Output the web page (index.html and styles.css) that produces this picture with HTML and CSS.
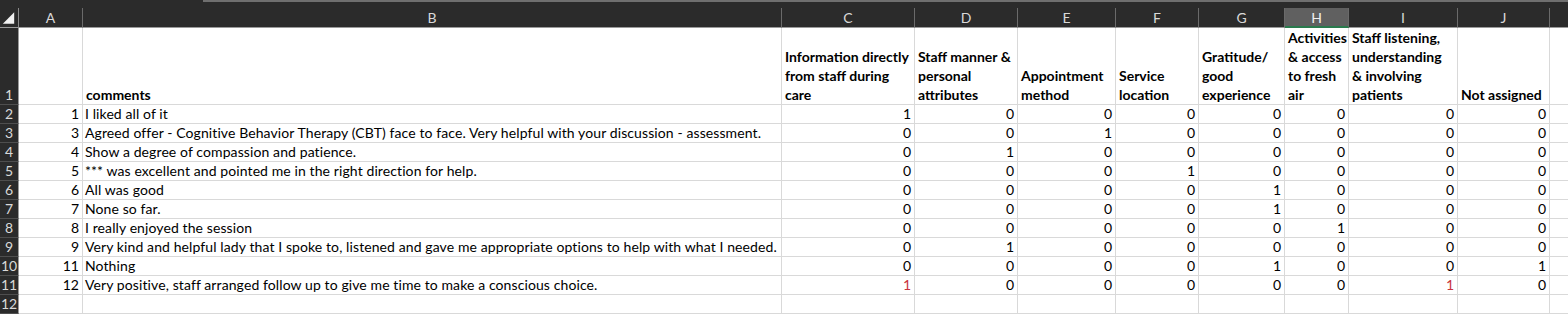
FILE: index.html
```html
<!DOCTYPE html>
<html>
<head>
<meta charset="utf-8">
<link rel="stylesheet" href="styles.css">
</head>
<body>
<div class="sheet">
  <div class="topbar"><div class="topbar-line"></div></div>
  <div class="grid">
    <div class="corner"><svg width="19" height="19" viewBox="0 0 19 19"><polygon points="15,4 15,16 3,16" fill="#f2f2f2"/></svg></div>
    <div class="ch">A</div>
    <div class="ch">B</div>
    <div class="ch">C</div>
    <div class="ch">D</div>
    <div class="ch">E</div>
    <div class="ch">F</div>
    <div class="ch">G</div>
    <div class="ch ch-sel">H</div>
    <div class="ch">I</div>
    <div class="ch">J</div>
    <div class="ch last"></div>

    <div class="rh">1</div>
    <div class="c hd"></div>
    <div class="c hd">comments</div>
    <div class="c hd">Information directly<br>from staff during<br>care</div>
    <div class="c hd">Staff manner &amp;<br>personal<br>attributes</div>
    <div class="c hd">Appointment<br>method</div>
    <div class="c hd">Service<br>location</div>
    <div class="c hd">Gratitude/<br>good<br>experience</div>
    <div class="c hd">Activities<br>&amp; access<br>to fresh<br>air</div>
    <div class="c hd">Staff listening,<br>understanding<br>&amp; involving<br>patients</div>
    <div class="c hd">Not assigned</div>
    <div class="c last"></div>

    <div class="rh">2</div><div class="c n">1</div><div class="c t">I liked all of it</div>
    <div class="c n">1</div><div class="c n">0</div><div class="c n">0</div><div class="c n">0</div><div class="c n">0</div><div class="c n">0</div><div class="c n">0</div><div class="c n">0</div><div class="c last"></div>

    <div class="rh">3</div><div class="c n">3</div><div class="c t">Agreed offer - Cognitive Behavior Therapy (CBT) face to face. Very helpful with your discussion - assessment.</div>
    <div class="c n">0</div><div class="c n">0</div><div class="c n">1</div><div class="c n">0</div><div class="c n">0</div><div class="c n">0</div><div class="c n">0</div><div class="c n">0</div><div class="c last"></div>

    <div class="rh">4</div><div class="c n">4</div><div class="c t">Show a degree of compassion and patience.</div>
    <div class="c n">0</div><div class="c n">1</div><div class="c n">0</div><div class="c n">0</div><div class="c n">0</div><div class="c n">0</div><div class="c n">0</div><div class="c n">0</div><div class="c last"></div>

    <div class="rh">5</div><div class="c n">5</div><div class="c t">*** was excellent and pointed me in the right direction for help.</div>
    <div class="c n">0</div><div class="c n">0</div><div class="c n">0</div><div class="c n">1</div><div class="c n">0</div><div class="c n">0</div><div class="c n">0</div><div class="c n">0</div><div class="c last"></div>

    <div class="rh">6</div><div class="c n">6</div><div class="c t">All was good</div>
    <div class="c n">0</div><div class="c n">0</div><div class="c n">0</div><div class="c n">0</div><div class="c n">1</div><div class="c n">0</div><div class="c n">0</div><div class="c n">0</div><div class="c last"></div>

    <div class="rh">7</div><div class="c n">7</div><div class="c t">None so far.</div>
    <div class="c n">0</div><div class="c n">0</div><div class="c n">0</div><div class="c n">0</div><div class="c n">1</div><div class="c n">0</div><div class="c n">0</div><div class="c n">0</div><div class="c last"></div>

    <div class="rh">8</div><div class="c n">8</div><div class="c t">I really enjoyed the session</div>
    <div class="c n">0</div><div class="c n">0</div><div class="c n">0</div><div class="c n">0</div><div class="c n">0</div><div class="c n">1</div><div class="c n">0</div><div class="c n">0</div><div class="c last"></div>

    <div class="rh">9</div><div class="c n">9</div><div class="c t">Very kind and helpful lady that I spoke to, listened and gave me appropriate options to help with what I needed.</div>
    <div class="c n">0</div><div class="c n">1</div><div class="c n">0</div><div class="c n">0</div><div class="c n">0</div><div class="c n">0</div><div class="c n">0</div><div class="c n">0</div><div class="c last"></div>

    <div class="rh">10</div><div class="c n">11</div><div class="c t">Nothing</div>
    <div class="c n">0</div><div class="c n">0</div><div class="c n">0</div><div class="c n">0</div><div class="c n">1</div><div class="c n">0</div><div class="c n">0</div><div class="c n">1</div><div class="c last"></div>

    <div class="rh">11</div><div class="c n">12</div><div class="c t">Very positive, staff arranged follow up to give me time to make a conscious choice.</div>
    <div class="c n red">1</div><div class="c n">0</div><div class="c n">0</div><div class="c n">0</div><div class="c n">0</div><div class="c n">0</div><div class="c n red">1</div><div class="c n">0</div><div class="c last"></div>

    <div class="rh">12</div><div class="c"></div><div class="c"></div>
    <div class="c"></div><div class="c"></div><div class="c"></div><div class="c"></div><div class="c"></div><div class="c"></div><div class="c"></div><div class="c"></div><div class="c last"></div>
  </div>
</div>
</body>
</html>
```

FILE: styles.css
```css
html, body {
  margin: 0;
  padding: 0;
  background: #ffffff;
  overflow: hidden;
}
.sheet {
  width: 1568px;
  height: 314px;
  overflow: hidden;
  font-family: "Lato", "Open Sans", sans-serif;
  font-size: 14px;
  color: #000;
}
.topbar {
  height: 8px;
  background: #2b2b2b;
  position: relative;
}
.topbar-line {
  position: absolute;
  left: 203px;
  right: 0;
  top: 0;
  height: 2px;
  background: #6f6f6f;
}
.grid {
  display: grid;
  grid-template-columns: 19px 64px 699px 133px 103px 98px 83px 86px 64px 109px 92px 18px;
  grid-template-rows: 20px 77px repeat(11, 19px);
}
.corner {
  background: #2b2b2b;
  border-right: 1px solid #8a8a8a;
  border-bottom: 1px solid #9a9a9a;
  box-sizing: border-box;
  display: flex;
}
.ch {
  background: #2b2b2b;
  color: #d9d9d9;
  border-right: 1px solid #6a6a6a;
  border-bottom: 1px solid #9a9a9a;
  box-sizing: border-box;
  display: flex;
  align-items: center;
  justify-content: center;
  font-size: 14px;
  line-height: 19px;
}
.ch-sel {
  background: #606060;
  color: #f0f0f0;
  border-bottom: 2px solid #2a7a4d;
}
.rh {
  background: #2b2b2b;
  color: #d9d9d9;
  border-right: 1px solid #9a9a9a;
  border-bottom: 1px solid #4e4e4e;
  box-sizing: border-box;
  display: flex;
  align-items: flex-end;
  justify-content: center;
  font-size: 14px;
  line-height: 18px;
}
.c {
  border-right: 1px solid #d9d9d9;
  border-bottom: 1px solid #d9d9d9;
  box-sizing: border-box;
  line-height: 18px;
  white-space: nowrap;
  overflow: visible;
  display: flex;
  align-items: flex-end;
  padding: 0 3px 0 3px;
}
.last {
  border-right: none;
}
.hd {
  font-weight: 700;
  line-height: 19px;
  align-self: stretch;
}
.n {
  justify-content: flex-end;
}
.t {
  justify-content: flex-start;
  padding-left: 2px;
  letter-spacing: 0.1px;
}
.red {
  color: #c8323c;
}
```
